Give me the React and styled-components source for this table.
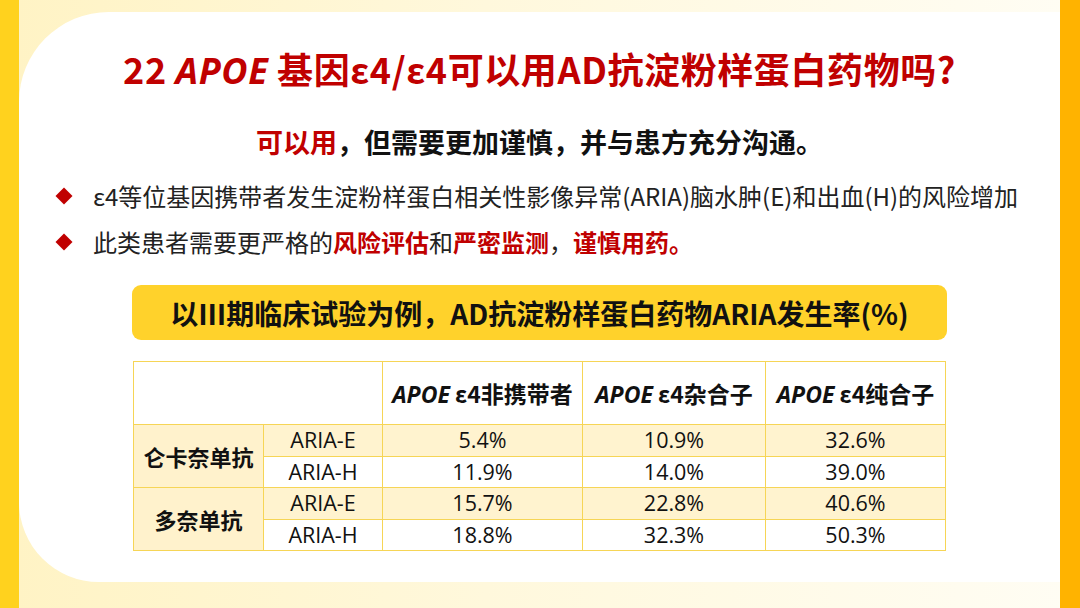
import styled, { createGlobalStyle } from "styled-components";

const GlobalStyle = createGlobalStyle`
  html, body {
    margin: 0;
    padding: 0;
  }
  body {
    font-family: "Open Sans", "Noto Sans CJK SC", sans-serif;
    color: #111;
  }
`;

const rows = [
  { drug: "仑卡奈单抗", type: "ARIA-E", values: ["5.4%", "10.9%", "32.6%"] },
  { drug: null, type: "ARIA-H", values: ["11.9%", "14.0%", "39.0%"] },
  { drug: "多奈单抗", type: "ARIA-E", values: ["15.7%", "22.8%", "40.6%"] },
  { drug: null, type: "ARIA-H", values: ["18.8%", "32.3%", "50.3%"] },
];

const headers = ["非携带者", "杂合子", "纯合子"];

function App() {
  return (
    <Page>
      <GlobalStyle />
      <SideBar $color="#FFD21E" $width="19px" />
      <Stage>
        <Card>
          <Title>
            22 <i>APOE</i> 基因ε4/ε4可以用AD抗淀粉样蛋白药物吗?
          </Title>
          <Subtitle>
            <Red>可以用</Red>，但需要更加谨慎，并与患方充分沟通。
          </Subtitle>
          <BulletList>
            <Bullet>
              <Diamond />
              ε4等位基因携带者发生淀粉样蛋白相关性影像异常(ARIA)脑水肿(E)和出血(H)的风险增加
            </Bullet>
            <Bullet>
              <Diamond />
              <span>
                此类患者需要更严格的<Red>风险评估</Red>和<Red>严密监测</Red>，
                <Red>谨慎用药。</Red>
              </span>
            </Bullet>
          </BulletList>
          <Banner>以Ⅲ期临床试验为例，AD抗淀粉样蛋白药物ARIA发生率(%)</Banner>
          <Table>
            <colgroup>
              <col style={{ width: 130 }} />
              <col style={{ width: 119 }} />
              <col style={{ width: 200 }} />
              <col style={{ width: 183 }} />
              <col style={{ width: 180 }} />
            </colgroup>
            <thead>
              <tr>
                <HeadCell colSpan={2} />
                {headers.map((h) => (
                  <HeadCell key={h}>
                    <i>APOE</i> ε4{h}
                  </HeadCell>
                ))}
              </tr>
            </thead>
            <tbody>
              {rows.map((row, i) => (
                <tr key={i}>
                  {row.drug && <DrugCell rowSpan={2}>{row.drug}</DrugCell>}
                  <Cell $shaded={row.type === "ARIA-E"}>{row.type}</Cell>
                  {row.values.map((v, j) => (
                    <Cell key={j} $shaded={row.type === "ARIA-E"}>
                      {v}
                    </Cell>
                  ))}
                </tr>
              ))}
            </tbody>
          </Table>
        </Card>
      </Stage>
      <SideBar $color="#FFB300" $width="20px" />
    </Page>
  );
}

const Page = styled.div`
  display: flex;
  width: 1080px;
  height: 608px;
  overflow: hidden;
  background: linear-gradient(90deg, #fff3c4 0%, #fff8dc 45%, #fffdf4 100%);
`;

const SideBar = styled.div`
  flex: 0 0 ${(p) => p.$width};
  background: ${(p) => p.$color};
`;

const Stage = styled.div`
  flex: 1;
  padding: 12px 0 26px 0;
  display: flex;
`;

const Card = styled.div`
  flex: 1;
  background: #fff;
  border-radius: 90px 0 0 80px;
  display: flex;
  flex-direction: column;
  align-items: center;
  padding-top: 35px;
`;

const Title = styled.h1`
  margin: 0;
  font-family: "Noto Sans CJK SC", sans-serif;
  font-size: 36px;
  line-height: 43px;
  font-weight: 700;
  color: #c00000;
  letter-spacing: 0.6px;

  i {
    font-family: "Open Sans", sans-serif;
    font-style: italic;
  }
`;

const Subtitle = styled.div`
  margin-top: 32px;
  font-family: "Noto Sans CJK SC", sans-serif;
  font-size: 27px;
  line-height: 36px;
  font-weight: 700;
  color: #111;
`;

const Red = styled.span`
  color: #c00000;
  font-weight: 700;
`;

const BulletList = styled.div`
  align-self: stretch;
  padding-left: 36px;
  margin-top: 20px;
  display: flex;
  flex-direction: column;
  gap: 14px;
`;

const Bullet = styled.div`
  display: flex;
  align-items: center;
  font-family: "Noto Sans CJK SC", sans-serif;
  font-size: 24px;
  line-height: 32px;
  color: #222;
  white-space: nowrap;
`;

const Diamond = styled.span`
  width: 12px;
  height: 12px;
  background: #c00000;
  transform: rotate(45deg);
  margin: 0 23px 0 3px;
  flex-shrink: 0;
`;

const Banner = styled.div`
  margin-top: 27px;
  width: 815px;
  height: 55px;
  border-radius: 9px;
  background: #ffd22b;
  display: flex;
  align-items: center;
  justify-content: center;
  font-family: "Noto Sans CJK SC", sans-serif;
  font-size: 28px;
  font-weight: 700;
  color: #111;
`;

const Table = styled.table`
  margin-top: 21px;
  width: 812px;
  border-collapse: collapse;
  table-layout: fixed;
  font-family: "Open Sans", "Noto Sans CJK SC", sans-serif;
  font-size: 21.5px;
  color: #111;

  td,
  th {
    border: 1.5px solid #f6d556;
    text-align: center;
    padding: 0;
  }
`;

const HeadCell = styled.th`
  height: 62px;
  background: #fff;
  font-family: "Noto Sans CJK SC", sans-serif;
  font-size: 23px;
  font-weight: 700;

  i {
    font-family: "Open Sans", sans-serif;
  }
`;

const DrugCell = styled.td`
  background: #fff2cc;
  font-family: "Noto Sans CJK SC", sans-serif;
  font-size: 22px;
  font-weight: 700;
`;

const Cell = styled.td`
  height: 30.5px;
  line-height: 30px;
  background: ${(p) => (p.$shaded ? "#fff3cf" : "#fff")};
`;

export default App;
